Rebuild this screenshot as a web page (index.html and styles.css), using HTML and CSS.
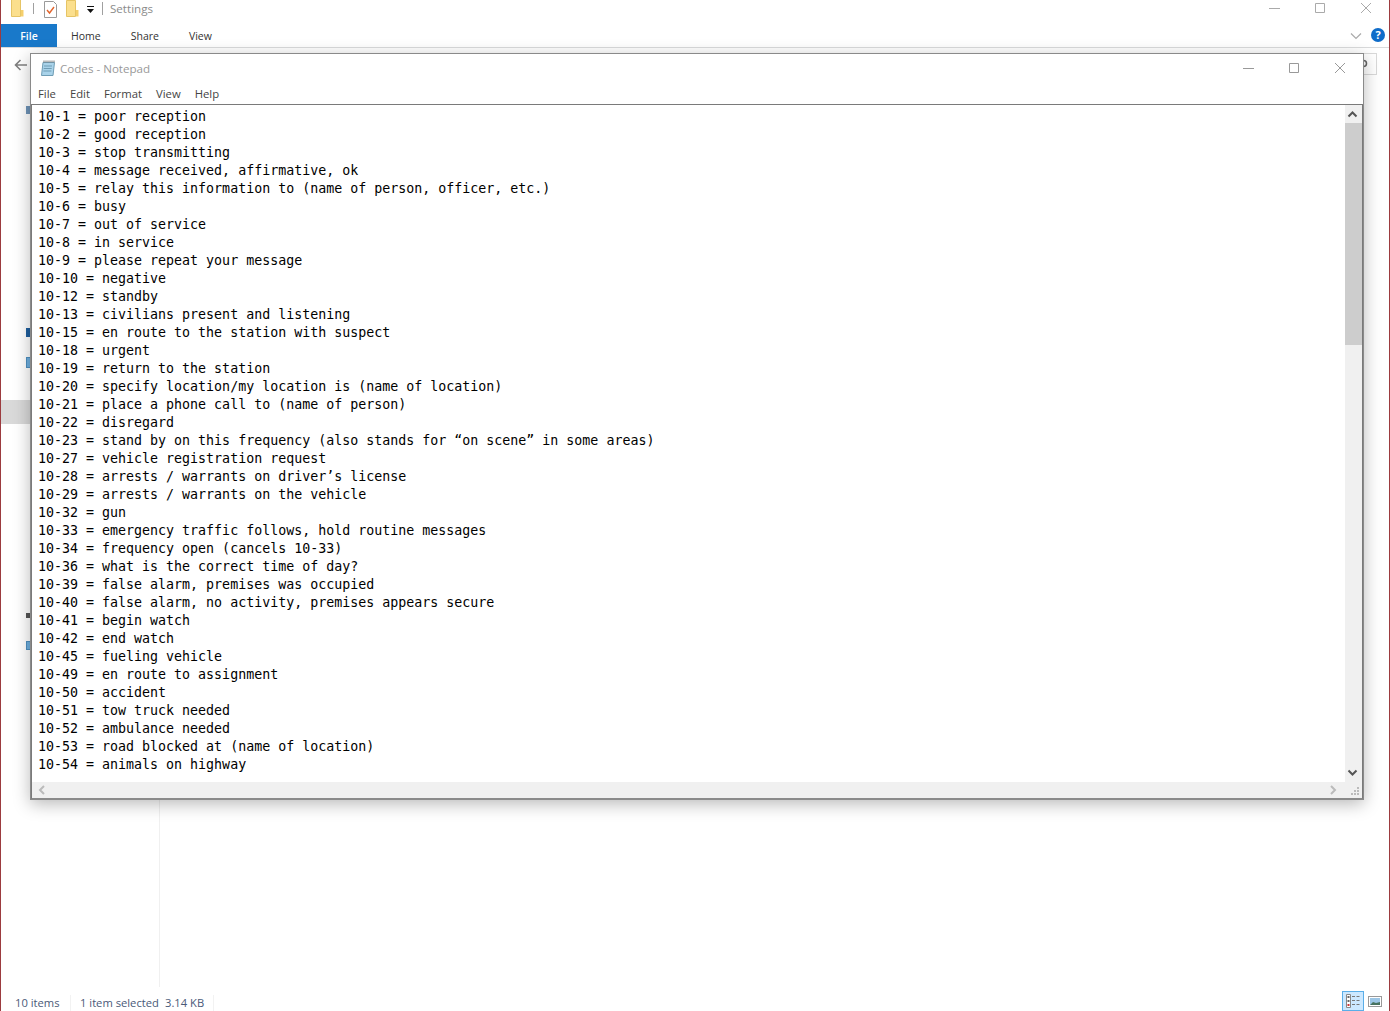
FILE: index.html
```html
<!DOCTYPE html>
<html lang="en">
<head>
<meta charset="utf-8">
<title>Codes - Notepad</title>
<link rel="stylesheet" href="styles.css">
</head>
<body>
<div class="explorer">
  <div class="ex-title">
    <svg class="ic-folder" width="13" height="17" viewBox="0 0 13 17"><path d="M.5-1h9v17.500H.5z" fill="#fbdf8d" stroke="#e6c465"/><path d="M10 10h2.500v6.500H10z" fill="#f5cf6c"/></svg>
    <span class="sep"></span>
    <svg class="ic-check" width="13" height="17" viewBox="0 0 13 17"><path d="M.5.5h9l3 3v13H.5z" fill="#fff" stroke="#9a9a9a"/><path d="M3 9l2.500 3L10 6" fill="none" stroke="#e2642c" stroke-width="1.400"/></svg>
    <svg class="ic-folder2" width="13" height="17" viewBox="0 0 13 17"><path d="M.5.5h9v16H.5z" fill="#fbdf8d" stroke="#e6c465"/><path d="M10 10h2.500v6.500H10z" fill="#f5cf6c"/></svg>
    <svg class="ic-qat" width="8" height="8" viewBox="0 0 8 8"><path d="M0 0h7v1H0zM0 3h7L3.500 7z" fill="#111"/></svg>
    <span class="sep sep2"></span>
    <span class="ex-name">Settings</span>
    <div class="caps ex-caps">
      <svg width="46" height="16" viewBox="0 0 46 16"><path d="M18 8.500h11" stroke="#aaa"/></svg>
      <svg width="46" height="16" viewBox="0 0 46 16"><path d="M18.500 3.500h9v9h-9z" fill="none" stroke="#aaa"/></svg>
      <svg width="46" height="16" viewBox="0 0 46 16"><path d="M18 3l10 10M28 3L18 13" stroke="#aaa" fill="none"/></svg>
    </div>
  </div>
  <div class="ex-tabs">
    <span class="tab-file">File</span>
    <span class="tab tab-home">Home</span>
    <span class="tab tab-share">Share</span>
    <span class="tab tab-view">View</span>
    <svg class="chev" width="12" height="8" viewBox="0 0 12 8"><path d="M1 1.500l5 5 5-5" fill="none" stroke="#aaa" stroke-width="1.200"/></svg>
    <span class="help">?</span>
  </div>
  <div class="ex-main">
    <div class="nav-bar">
      <svg class="back" width="14" height="12" viewBox="0 0 14 12"><path d="M13 6H2M6.500 1L1.500 6l5 5" fill="none" stroke="#808080" stroke-width="1.600"/></svg>
      <span class="search-box">
        <svg width="8" height="10" viewBox="0 0 8 10"><circle cx="1.500" cy="4.500" r="3" fill="none" stroke="#666" stroke-width="1.500"/></svg>
      </span>
    </div>
    <div class="pane">
      <div class="tree">
        <span class="peek peek-1"></span>
        <span class="peek peek-2"></span>
        <span class="peek peek-3"></span>
        <span class="peek peek-4"></span>
        <span class="peek peek-5"></span>
        <span class="tree-sel"></span>
      </div>
      <div class="files"></div>
    </div>
  </div>
  <div class="status">
    <span class="st-items">10 items</span>
    <span class="st-sel">1 item selected</span>
    <span class="st-size">3.14 KB</span>
    <span class="views">
      <span class="view-on">
        <svg width="18" height="16" viewBox="0 0 18 16"><path d="M2.500 1.500h4v13h-4z" fill="#fff" stroke="#888"/><path d="M3.500 3h2v2h-2zM3.500 7h2v2h-2z" fill="#666"/><path d="M3.500 11h2v2h-2z" fill="#c33"/><path d="M8 3.500h3M12.500 3.500h3M8 7.500h3M12.500 7.500h3M8 11.500h3M12.500 11.500h3" stroke="#777"/></svg>
      </span>
      <svg class="view-off" width="14" height="11" viewBox="0 0 14 11"><rect x=".5" y=".5" width="13" height="10" fill="#fff" stroke="#999"/><rect x="2" y="2" width="10" height="7" fill="#9cc6e6"/><path d="M2 9l3-3 3 1 4-1v3z" fill="#47735f"/></svg>
    </span>
  </div>
</div>

<div class="notepad">
  <div class="np-title">
    <svg class="np-icon" width="16" height="16" viewBox="0 0 16 16"><path d="M3 2.500h11.500l-1.500 13H1.500z" fill="#a9d3ea" stroke="#6f9db5"/><path d="M3.500 1.500h11" stroke="#777" stroke-dasharray="1 1" stroke-width="2"/><path d="M4 6h8M3.700 8.500h8M3.400 11h8" stroke="#6f9db5"/></svg>
    <span class="np-name">Codes - Notepad</span>
    <div class="caps np-caps">
      <svg width="46" height="16" viewBox="0 0 46 16"><path d="M18 8.500h11" stroke="#999"/></svg>
      <svg width="46" height="16" viewBox="0 0 46 16"><path d="M18.500 3.500h9v9h-9z" fill="none" stroke="#999"/></svg>
      <svg width="46" height="16" viewBox="0 0 46 16"><path d="M18 3l10 10M28 3L18 13" stroke="#999" fill="none"/></svg>
    </div>
  </div>
  <div class="np-menu">
    <span>File</span><span>Edit</span><span>Format</span><span>View</span><span>Help</span>
  </div>
  <div class="np-edit">
    <div class="np-row">
<pre class="np-text">10-1 = poor reception
10-2 = good reception
10-3 = stop transmitting
10-4 = message received, affirmative, ok
10-5 = relay this information to (name of person, officer, etc.)
10-6 = busy
10-7 = out of service
10-8 = in service
10-9 = please repeat your message
10-10 = negative
10-12 = standby
10-13 = civilians present and listening
10-15 = en route to the station with suspect
10-18 = urgent
10-19 = return to the station
10-20 = specify location/my location is (name of location)
10-21 = place a phone call to (name of person)
10-22 = disregard
10-23 = stand by on this frequency (also stands for “on scene” in some areas)
10-27 = vehicle registration request
10-28 = arrests / warrants on driver’s license
10-29 = arrests / warrants on the vehicle
10-32 = gun
10-33 = emergency traffic follows, hold routine messages
10-34 = frequency open (cancels 10-33)
10-36 = what is the correct time of day?
10-39 = false alarm, premises was occupied
10-40 = false alarm, no activity, premises appears secure
10-41 = begin watch
10-42 = end watch
10-45 = fueling vehicle
10-49 = en route to assignment
10-50 = accident
10-51 = tow truck needed
10-52 = ambulance needed
10-53 = road blocked at (name of location)
10-54 = animals on highway</pre>
      <div class="vbar">
        <svg class="arrow" width="17" height="18" viewBox="0 0 17 18"><path d="M3.500 11.500l4-4 4 4" fill="none" stroke="#555" stroke-width="2"/></svg>
        <div class="thumb"></div>
        <svg class="arrow arrow-down" width="17" height="18" viewBox="0 0 17 18"><path d="M3.500 6.500l4 4 4-4" fill="none" stroke="#555" stroke-width="2"/></svg>
      </div>
    </div>
    <div class="hbar">
      <svg width="17" height="16" viewBox="0 0 17 16"><path d="M12 4L8 8l4 4" fill="none" stroke="#bbb" stroke-width="2"/></svg>
      <svg class="h-right" width="17" height="16" viewBox="0 0 17 16"><path d="M5 4l4 4-4 4" fill="none" stroke="#bbb" stroke-width="2"/></svg>
      <svg class="grip" width="13" height="16" viewBox="0 0 13 16"><path d="M8 5h2v2H8zM5 8h2v2H5zM8 8h2v2H8zM2 11h2v2H2zM5 11h2v2H5zM8 11h2v2H8z" fill="#bbb"/></svg>
    </div>
  </div>
</div>
</body>
</html>
```
FILE: styles.css
```css
* { box-sizing: border-box; }
html, body { margin: 0; height: 100%; overflow: hidden; background: #fff; }
body { font-family: "Open Sans", "Noto Sans", sans-serif; position: relative; width: 1390px; height: 1011px; }
svg { display: block; flex: none; }

.explorer {
  width: 1390px; height: 1011px;
  display: flex; flex-direction: column;
  border-left: 1px solid #9c3b3f; border-right: 1px solid #9c3b3f;
  background: #fff;
}
.ex-title { height: 24px; display: flex; align-items: flex-start; padding-left: 10px; flex: none; }
.sep { width: 1px; height: 11px; background: #a0a0a0; margin: 3px 0 0 9px; }
.ic-check { margin: 1px 0 0 10px; }
.ic-folder2 { margin: 0 0 0 9px; }
.ic-qat { margin: 6px 0 0 8px; }
.sep2 { height: 13px; margin: 2px 0 0 7px; }
.ex-name { font-size: 11.600px; color: #8b8b8b; margin: 0 0 0 7px; line-height: 17px; }
.caps { display: flex; margin-left: auto; }

.ex-tabs {
  height: 24px; flex: none; display: flex; align-items: center;
  border-bottom: 1px solid #dadbdc; font-size: 10.500px; color: #333;
}
.tab-file { width: 56px; height: 23px; background: #1979ca; color: #fff; display: flex; align-items: center; justify-content: center; font-weight: 600; }
.tab-home { margin-left: 14px; }
.tab-share { margin-left: 30px; }
.tab-view { margin-left: 30px; }
.chev { margin-left: auto; }
.help { width: 14px; height: 14px; margin: 0 4px 2px 9px; border-radius: 50%; background: #0f6cc9; color: #fff; font-size: 11px; font-weight: 700; display: flex; align-items: center; justify-content: center; }

.ex-main { flex: 1; display: flex; flex-direction: column; min-height: 0; }
.nav-bar { height: 32px; flex: none; display: flex; align-items: center; padding: 2px 12px 0 13px; justify-content: space-between; }
.search-box { width: 30px; height: 22px; margin-top: -2px; border: 1px solid #d9d9d9; display: flex; align-items: center; justify-content: flex-end; padding-right: 6px; }
.pane { flex: 1; display: flex; min-height: 0; }
.tree { width: 159px; border-right: 1px solid #f0f0f0; padding-top: 320px; position: relative; }
.tree-sel { display: block; height: 24px; background: #d9d9d9; }
.peek { position: absolute; left: 25px; width: 5px; }
.peek-1 { top: 26px; height: 8px; background: #6f94b8; }
.peek-2 { top: 248px; height: 9px; background: #1f5f9e; }
.peek-3 { top: 277px; height: 11px; background: #6fb0e0; border: 1px solid #4f90c0; }
.peek-4 { top: 533px; height: 5px; background: #555; }
.peek-5 { top: 561px; height: 9px; background: #6fb0e0; border: 1px solid #4f90c0; }
.files { flex: 1; }

.status { height: 24px; flex: none; display: flex; align-items: flex-end; font-size: 11.200px; line-height: 16px; color: #4a5a78; padding-left: 14px; }
.st-items { width: 56px; margin-right: 9px; border-right: 1px solid #f2f2f2; }
.st-sel { width: 85px; }
.st-size { width: 49px; border-right: 1px solid #f2f2f2; }
.views { margin-left: auto; display: flex; align-items: flex-end; margin-right: 7px; }
.view-on { width: 22px; height: 20px; background: #cce8ff; border: 1px solid #5aaee8; display: flex; align-items: center; justify-content: center; }
.view-off { margin-left: 4px; margin-bottom: 4px; }

.notepad {
  position: absolute; left: 30px; top: 53px; width: 1334px; height: 747px;
  background: #fff; border: 1px solid #8a8a8a;
  box-shadow: 0 4px 16px rgba(0,0,0,.28);
  display: flex; flex-direction: column;
}
.np-title { height: 28px; flex: none; display: flex; align-items: center; padding-left: 9px; }
.np-name { font-size: 11.600px; color: #999; margin-left: 4px; }
.np-menu { height: 22px; flex: none; display: flex; align-items: center; gap: 14px; padding: 1px 0 0 7px; font-size: 11.300px; color: #444; }
.np-edit { flex: 1; border: 1px solid #7a7a7a; border-bottom-color: #8a8a8a; display: flex; flex-direction: column; min-height: 0; }
.np-row { flex: 1; display: flex; min-height: 0; }
.np-text {
  flex: 1; margin: 0; padding: 3px 0 0 6px;
  font-family: "DejaVu Sans Mono", "Liberation Mono", monospace;
  font-size: 13.300px; line-height: 18px; color: #000; overflow: hidden;
}
.vbar { width: 17px; background: #f0f0f0; display: flex; flex-direction: column; }
.thumb { height: 222px; background: #cdcdcd; }
.arrow-down { margin-top: auto; }
.hbar { height: 16px; flex: none; background: #f0f0f0; display: flex; }
.h-right { margin-left: auto; margin-right: 6px; }
```
